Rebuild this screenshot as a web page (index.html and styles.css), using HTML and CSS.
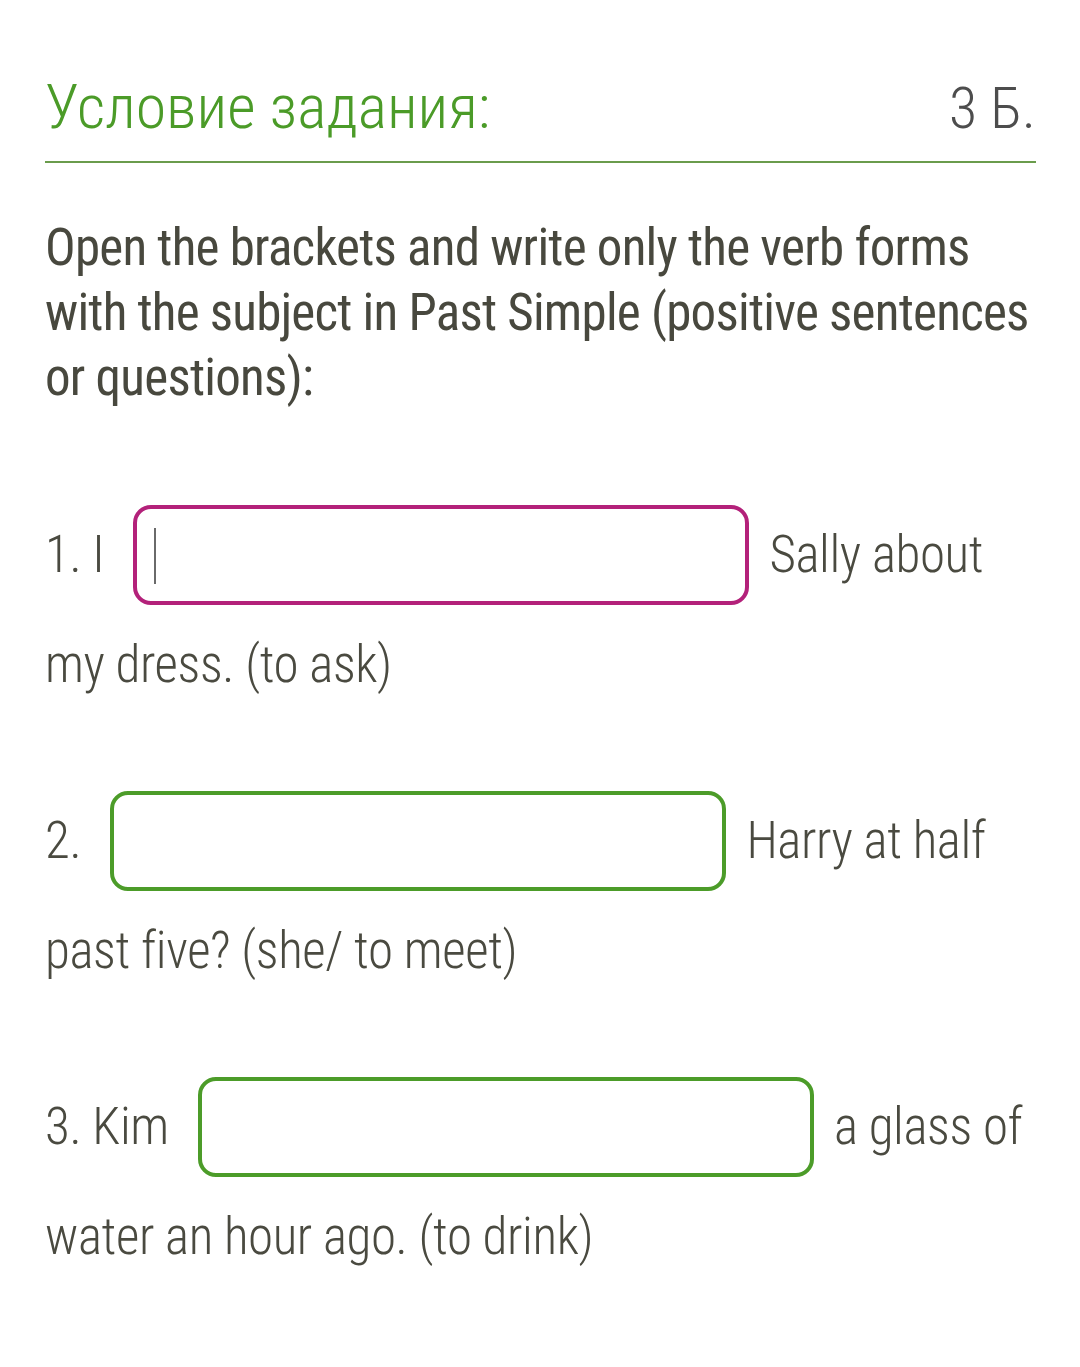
FILE: index.html
```html
<!DOCTYPE html>
<html lang="ru">
<head>
<meta charset="utf-8">
<link rel="stylesheet" href="styles.css">
</head>
<body>
<main class="task">
  <header class="task-head">
    <h1 class="task-title">Условие задания:</h1>
    <span class="task-points">3 Б.</span>
  </header>
  <p class="task-text">Open the brackets and write only the verb forms with the subject in Past Simple (positive sentences or questions):</p>
  <p class="item">1. I <span class="field field-active"><span class="caret"></span></span> Sally about my dress. (to ask)</p>
  <p class="item">2. <span class="field"></span> Harry at half past five? (she/ to meet)</p>
  <p class="item">3. Kim <span class="field"></span> a glass of water an hour ago. (to drink)</p>
</main>
</body>
</html>
```
FILE: styles.css
```css
html, body {
  margin: 0;
  padding: 0;
  background: #ffffff;
}
.task {
  padding: 67px 44px 0 45px;
  font-family: Roboto, "Noto Sans", sans-serif;
  font-stretch: 75%;
  color: #4a4a40;
}
.task-head {
  display: flex;
  justify-content: space-between;
  align-items: baseline;
  border-bottom: 2px solid #6a9c4c;
  padding-bottom: 14px;
}
.task-title {
  margin: 0;
  font-size: 62px;
  font-weight: 300;
  line-height: 80px;
  color: #4b9b28;
}
.task-points {
  font-size: 58px;
  font-weight: 300;
  color: #4d4d4d;
}
.task-text {
  margin: 52px 0 0;
  font-size: 51px;
  letter-spacing: -0.75px;
  font-weight: 400;
  line-height: 65px;
  color: #48483e;
}
.item {
  margin: 90px 0 0;
  font-size: 51px;
  letter-spacing: -0.4px;
  font-weight: 300;
  line-height: 110px;
  color: #4a4a40;
}
.item + .item {
  margin-top: 66px;
}
.field {
  display: inline-block;
  box-sizing: border-box;
  width: 616px;
  height: 100px;
  margin: 0 9px 0 18px;
  border: 4px solid #4c9c29;
  border-radius: 18px;
  vertical-align: -33px;
  position: relative;
}
.field-active {
  border-color: #b3217a;
}
.caret {
  position: absolute;
  left: 17px;
  top: 19px;
  width: 2px;
  height: 56px;
  background: #6a6a6a;
}
```
